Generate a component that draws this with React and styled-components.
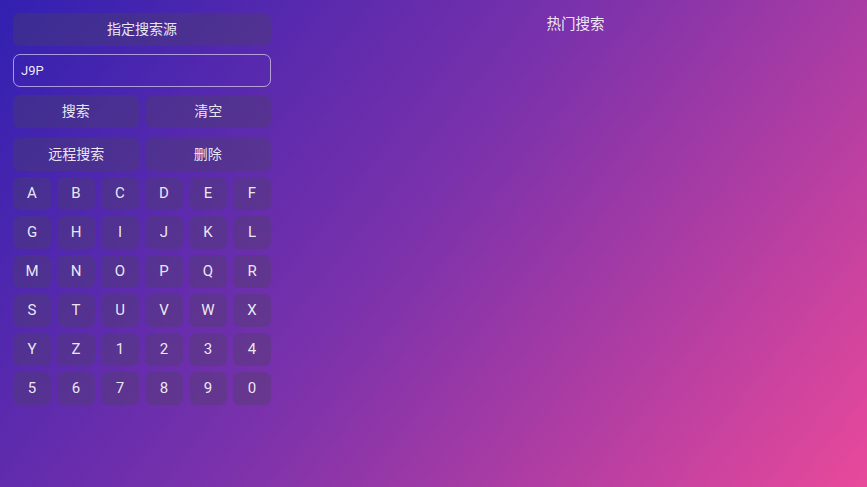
import React from "react";
import styled, { createGlobalStyle } from "styled-components";

const Global = createGlobalStyle`
  html, body { margin: 0; padding: 0; width: 100%; height: 100%; }
  body { font-family: Roboto, "Noto Sans CJK SC", sans-serif; }
  #root { width: 100%; height: 100%; }
`;

const Page = styled.div`
  width: 867px;
  height: 487px;
  display: flex;
  background: linear-gradient(128deg, #3120b1 0%, #7c32ab 48%, #e8499a 100%);
  color: rgba(255, 255, 255, 0.9);
  overflow: hidden;
`;

const Left = styled.div`
  width: 258px;
  padding: 13px;
  display: flex;
  flex-direction: column;
  flex-shrink: 0;
`;

const Btn = styled.div`
  height: 33px;
  border-radius: 7px;
  background: rgba(72, 66, 92, 0.34);
  display: flex;
  align-items: center;
  justify-content: center;
  font-size: 14px;
  line-height: 1;
  padding-bottom: ${(p) => (p.$cjk ? 2 : 0)}px;
  box-sizing: border-box;
  font-family: Roboto, "Noto Sans CJK SC", sans-serif;
  color: rgba(255, 255, 255, 0.9);
  flex: ${(p) => (p.$grow ? 1 : "none")};
`;

const Input = styled.div`
  margin-top: 8px;
  height: 31px;
  border: 1px solid rgba(255, 255, 255, 0.55);
  border-radius: 7px;
  display: flex;
  align-items: center;
  padding-left: 7px;
  font-size: 13px;
  color: rgba(255, 255, 255, 0.92);
`;

const Row = styled.div`
  display: flex;
  gap: ${(p) => p.$gap}px;
  margin-top: ${(p) => p.$mt}px;
`;

const Keys = styled.div`
  margin-top: 6px;
  display: grid;
  grid-template-columns: repeat(6, 38px);
  grid-auto-rows: 33px;
  column-gap: 6px;
  row-gap: 6px;
`;

const Key = styled(Btn)`
  font-size: 15px;
`;

const Right = styled.div`
  flex: 1;
  display: flex;
  justify-content: center;
  padding-top: 13px;
`;

const Title = styled.div`
  font-size: 14.5px;
  color: rgba(255, 255, 255, 0.9);
  font-family: "Noto Sans CJK SC", sans-serif;
  line-height: 20px;
  height: 20px;
`;

const keys = "ABCDEFGHIJKLMNOPQRSTUVWXYZ1234567890".split("");

export default function App() {
  return (
    <>
      <Global />
      <Page>
        <Left>
          <Btn $cjk>指定搜索源</Btn>
          <Input>J9P</Input>
          <Row $gap={7} $mt={8}>
            <Btn $cjk $grow>搜索</Btn>
            <Btn $cjk $grow>清空</Btn>
          </Row>
          <Row $gap={5} $mt={10}>
            <Btn $cjk $grow>远程搜索</Btn>
            <Btn $cjk $grow>删除</Btn>
          </Row>
          <Keys>
            {keys.map((k) => (
              <Key key={k}>{k}</Key>
            ))}
          </Keys>
        </Left>
        <Right>
          <Title>热门搜索</Title>
        </Right>
      </Page>
    </>
  );
}
